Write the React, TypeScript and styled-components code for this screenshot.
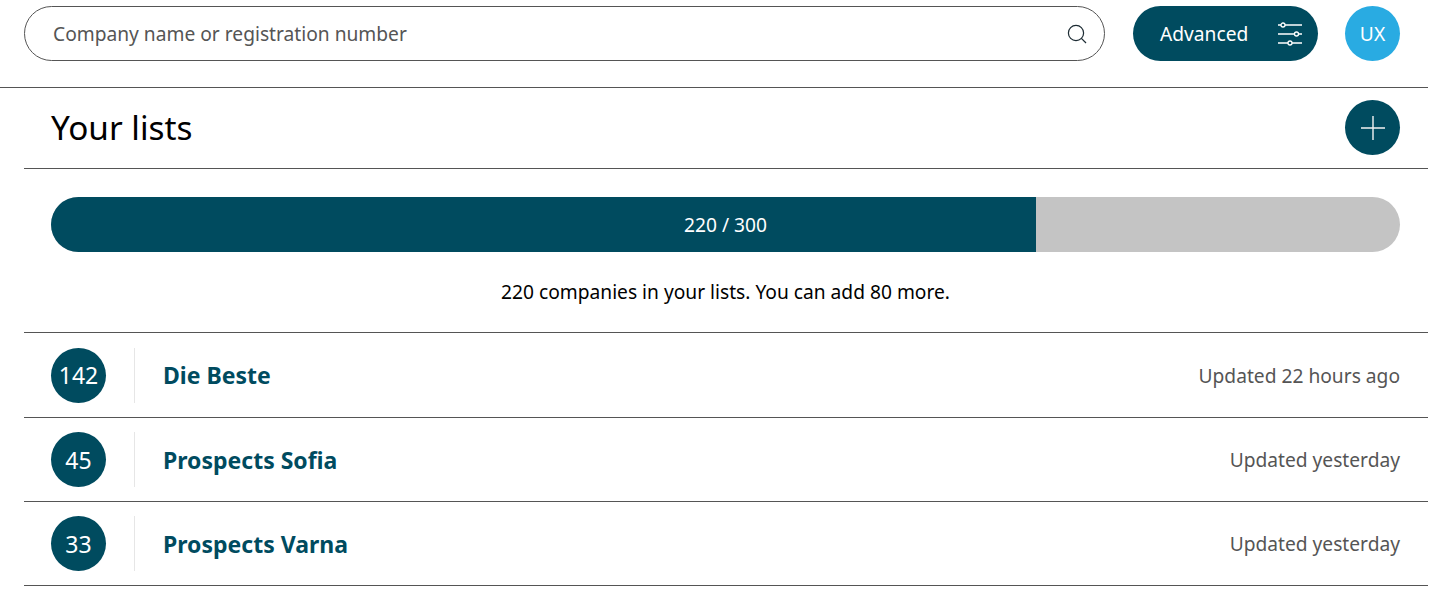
import React from "react";
import styled, { createGlobalStyle } from "styled-components";

const GlobalStyle = createGlobalStyle`
  html, body {
    margin: 0;
    padding: 0;
    background: #fff;
    font-family: "Noto Sans", "Open Sans", sans-serif;
  }
  * {
    box-sizing: border-box;
  }
`;

const Page = styled.div`
  width: 1430px;
  height: 616px;
  overflow: hidden;
  padding-right: 2px;
`;

const TopBar = styled.header`
  display: flex;
  align-items: center;
  height: 88px;
  padding: 6px 28px 26px 24px;
  border-bottom: 1px solid #555;
`;

const SearchBox = styled.div`
  flex: 1;
  display: flex;
  align-items: center;
  justify-content: space-between;
  height: 55px;
  padding: 0 16px 0 28px;
  border: 1px solid #555;
  border-radius: 28px;
  color: #555;
  font-size: 19.2px;
`;

const AdvancedButton = styled.button`
  display: flex;
  align-items: center;
  justify-content: space-between;
  width: 185px;
  height: 55px;
  margin-left: 28px;
  padding: 0 15px 0 27px;
  border: 0;
  border-radius: 28px;
  background: #004b5f;
  color: #fff;
  font-family: inherit;
  font-size: 19.2px;
`;

const Avatar = styled.div`
  display: flex;
  align-items: center;
  justify-content: center;
  width: 55px;
  height: 55px;
  margin-left: 27px;
  border-radius: 50%;
  background: #29abe2;
  color: #fff;
  font-size: 19.2px;
`;

const TitleRow = styled.div`
  display: flex;
  align-items: center;
  justify-content: space-between;
  height: 81px;
  margin-left: 24px;
  padding: 0 28px 1px 27px;
  border-bottom: 1px solid #555;
`;

const Title = styled.h1`
  margin: 0 0 1px;
  font-size: 33.3px;
  line-height: 45px;
  font-weight: 400;
  color: #000;
`;

const AddButton = styled.button`
  display: flex;
  align-items: center;
  justify-content: center;
  width: 55px;
  height: 55px;
  padding: 0;
  border: 0;
  border-radius: 50%;
  background: #004b5f;
`;

const Quota = styled.section`
  margin-left: 24px;
  padding: 28px 28px 0 27px;
  height: 164px;
  border-bottom: 1px solid #555;
`;

const Track = styled.div`
  display: grid;
  height: 55px;
  border-radius: 28px;
  overflow: hidden;
  background: #c4c4c4;
`;

const Fill = styled.div`
  grid-area: 1 / 1;
  background: #004b5f;
`;

const TrackLabel = styled.div`
  grid-area: 1 / 1;
  display: flex;
  align-items: center;
  justify-content: center;
  color: #fff;
  font-size: 19.2px;
`;

const QuotaText = styled.p`
  margin: 27px 0 0;
  text-align: center;
  color: #000;
  font-size: 19.2px;
  line-height: 25px;
`;

const ListRow = styled.div`
  display: flex;
  align-items: center;
  height: ${props => props.$height}px;
  margin-left: 24px;
  padding: 0 28px 0 27px;
  border-bottom: 1px solid #555;
`;

const Count = styled.div`
  display: flex;
  align-items: center;
  justify-content: center;
  width: 55px;
  height: 55px;
  border-radius: 50%;
  background: #004b5f;
  color: #fff;
  font-size: 23px;
`;

const Separator = styled.div`
  width: 1px;
  height: 55px;
  margin: 0 28px;
  background: #e6e6e6;
`;

const ListName = styled.div`
  flex: 1;
  color: #004b5f;
  font-size: 23px;
  font-weight: 700;
`;

const Updated = styled.div`
  color: #555;
  font-size: 19.2px;
`;

const SearchIcon = () => (
  <svg width="22" height="22" viewBox="0 0 22 22" fill="none" stroke="#1c2b33" strokeWidth="1.2">
    <circle cx="10" cy="10" r="7.6" />
    <path d="M15.4 15.4 L20 20" />
  </svg>
);

const SlidersIcon = () => (
  <svg width="26" height="26" viewBox="0 0 26 26" fill="none" stroke="#fff" strokeWidth="1.3">
    <path d="M1 4h3M8 4h17M1 13h16.500M21.500 13h3.500M1 22h10M15 22h10" />
    <circle cx="6" cy="4" r="2" />
    <circle cx="19.500" cy="13" r="2" />
    <circle cx="13" cy="22" r="2" />
  </svg>
);

const PlusIcon = () => (
  <svg width="24" height="24" viewBox="0 0 24 24" stroke="#f2f2f2" strokeWidth="1.4">
    <path d="M12 0v24M0 12h24" />
  </svg>
);

const lists = [
  { count: 142, name: "Die Beste", updated: "Updated 22 hours ago", height: 85 },
  { count: 45, name: "Prospects Sofia", updated: "Updated yesterday", height: 84 },
  { count: 33, name: "Prospects Varna", updated: "Updated yesterday", height: 84 },
];

export default function App() {
  return (
    <Page>
      <GlobalStyle />
      <TopBar>
        <SearchBox>
          Company name or registration number
          <SearchIcon />
        </SearchBox>
        <AdvancedButton>
          Advanced
          <SlidersIcon />
        </AdvancedButton>
        <Avatar>UX</Avatar>
      </TopBar>
      <TitleRow>
        <Title>Your lists</Title>
        <AddButton>
          <PlusIcon />
        </AddButton>
      </TitleRow>
      <Quota>
        <Track>
          <Fill style={{ width: "73%" }} />
          <TrackLabel>220 / 300</TrackLabel>
        </Track>
        <QuotaText>220 companies in your lists. You can add 80 more.</QuotaText>
      </Quota>
      {lists.map(list => (
        <ListRow key={list.name} $height={list.height}>
          <Count>{list.count}</Count>
          <Separator />
          <ListName>{list.name}</ListName>
          <Updated>{list.updated}</Updated>
        </ListRow>
      ))}
    </Page>
  );
}
